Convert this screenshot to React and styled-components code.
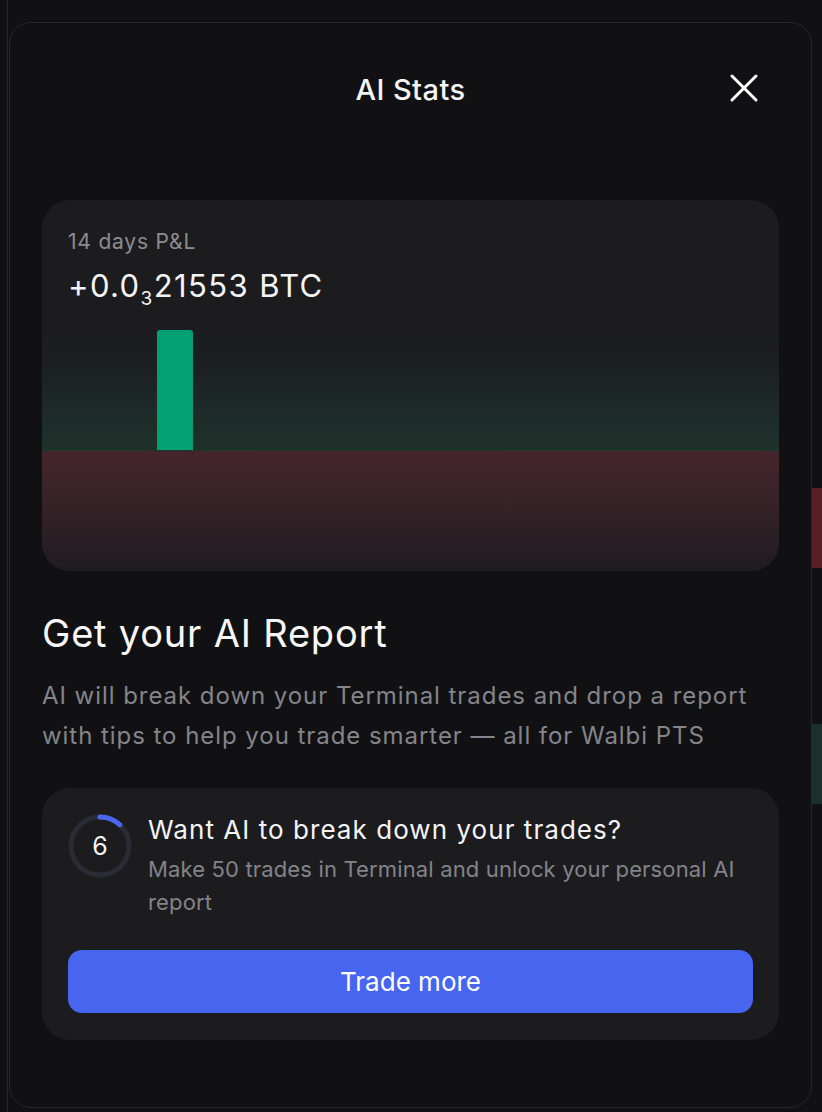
import React from "react";
import styled, { createGlobalStyle } from "styled-components";

const GlobalStyle = createGlobalStyle`
  html, body {
    margin: 0;
    padding: 0;
    background: #111114;
  }
  body {
    font-family: "Inter", "Noto Sans", sans-serif;
    -webkit-font-smoothing: antialiased;
  }
`;

const Page = styled.div`
  width: 822px;
  height: 1112px;
  box-sizing: border-box;
  padding: 22px 10px 4px 9px;
  background-color: #111114;
  background-image: linear-gradient(
      to right,
      transparent 7px,
      #26272b 7px,
      #26272b 8px,
      transparent 8px
    ),
    linear-gradient(
      to bottom,
      transparent 488px,
      rgba(120, 36, 44, 0.7) 488px,
      rgba(120, 36, 44, 0.7) 568px,
      transparent 568px,
      transparent 724px,
      rgba(40, 80, 66, 0.5) 724px,
      rgba(40, 80, 66, 0.5) 804px,
      transparent 804px
    );
  background-size: 100% 100%, 10px 100%;
  background-position: 0 0, right 0 top 0;
  background-repeat: no-repeat;
`;

const Modal = styled.div`
  height: 100%;
  box-sizing: border-box;
  background: #111114;
  border: 1.5px solid #26272b;
  border-radius: 22px;
  padding: 0 32px;
  display: flex;
  flex-direction: column;
`;

const Header = styled.div`
  position: relative;
  height: 132px;
  display: flex;
  align-items: center;
  justify-content: center;
`;

const Title = styled.h2`
  margin: 0;
  font-size: 29px;
  font-weight: 500;
  color: #f4f4f6;
  letter-spacing: 0.4px;
`;

const CloseButton = styled.button`
  position: absolute;
  right: 18px;
  top: 48px;
  width: 34px;
  height: 34px;
  padding: 0;
  border: none;
  background: transparent;
  cursor: pointer;
  display: flex;
  align-items: center;
  justify-content: center;
`;

const ChartCard = styled.div`
  margin-top: 45px;
  height: 371px;
  background: #1c1c1f;
  border-radius: 28px;
  overflow: hidden;
  display: flex;
  flex-direction: column;
`;

const ChartHead = styled.div`
  padding: 29px 26px 0;
`;

const Label = styled.div`
  font-size: 21px;
  color: #8c8c92;
  line-height: 26px;
  letter-spacing: 0.8px;
`;

const Amount = styled.div`
  margin-top: 14px;
  font-size: 31px;
  color: #f4f4f6;
  line-height: 34px;
  letter-spacing: 1.4px;
  sub {
    font-size: 19px;
    vertical-align: -8px;
    line-height: 0;
  }
`;

const Plot = styled.div`
  margin-top: 27px;
  flex: 1;
  display: flex;
  flex-direction: column;
`;

const Positive = styled.div`
  height: 120px;
  display: flex;
  align-items: flex-end;
  padding-left: 115px;
  background: linear-gradient(
    to bottom,
    rgba(28, 28, 31, 1) 0%,
    #1b1f1f 25%,
    #1e2b28 70%,
    #1f312b 100%
  );
  border-bottom: 1px dotted #2c4a40;
`;

const Bar = styled.div`
  width: 36px;
  height: ${(p) => p.h}px;
  background: #02a072;
  border-radius: 3px 3px 0 0;
`;

const Negative = styled.div`
  flex: 1;
  background: linear-gradient(
    to bottom,
    #45252b 0%,
    #3b2429 30%,
    #2b1f24 70%,
    #1e1c20 100%
  );
`;

const Heading = styled.h1`
  margin: 40px 0 0;
  font-size: 38px;
  font-weight: 400;
  color: #f7f7f9;
  line-height: 44px;
  letter-spacing: 0.8px;
`;

const Description = styled.p`
  margin: 21px 0 0;
  font-size: 24px;
  line-height: 40px;
  color: #84848a;
  letter-spacing: 0.95px;
`;

const TaskCard = styled.div`
  margin-top: 32px;
  background: #1c1c1f;
  border-radius: 28px;
  padding: 26px 26px 27px;
  display: flex;
  flex-direction: column;
  gap: 31px;
`;

const TaskRow = styled.div`
  display: flex;
  gap: 16px;
  align-items: flex-start;
`;

const Ring = styled.div`
  position: relative;
  width: 64px;
  height: 64px;
  flex-shrink: 0;
  display: flex;
  align-items: center;
  justify-content: center;
  svg {
    position: absolute;
    inset: 0;
  }
`;

const RingCount = styled.span`
  font-size: 25px;
  color: #f4f4f6;
`;

const TaskText = styled.div`
  display: flex;
  flex-direction: column;
`;

const TaskTitle = styled.div`
  font-size: 26px;
  line-height: 32px;
  color: #f4f4f6;
  letter-spacing: 1.05px;
`;

const TaskSub = styled.div`
  margin-top: 6.5px;
  font-size: 22px;
  line-height: 33px;
  color: #838389;
  letter-spacing: 0.15px;
`;

const PrimaryButton = styled.button`
  height: 63px;
  border: none;
  border-radius: 14px;
  background: #4865f0;
  color: #ffffff;
  font-family: inherit;
  font-size: 26px;
  cursor: pointer;
`;

const ProgressRing = ({ value, total }) => {
  const r = 29;
  const c = 2 * Math.PI * r;
  const len = (value / total) * c;
  return (
    <Ring>
      <svg width="64" height="64" viewBox="0 0 64 64">
        <circle cx="32" cy="32" r={r} fill="none" stroke="#2a2c35" strokeWidth="5" />
        <circle
          cx="32"
          cy="32"
          r={r}
          fill="none"
          stroke="#4a66f0"
          strokeWidth="5"
          strokeLinecap="round"
          strokeDasharray={`${len} ${c}`}
          transform="rotate(-90 32 32)"
        />
      </svg>
      <RingCount>{value}</RingCount>
    </Ring>
  );
};

const App = () => {
  return (
    <Page>
      <GlobalStyle />
      <Modal>
        <Header>
          <Title>AI Stats</Title>
          <CloseButton aria-label="Close">
            <svg width="30" height="30" viewBox="0 0 30 30">
              <path
                d="M3 3 L27 27 M27 3 L3 27"
                stroke="#ffffff"
                strokeWidth="3"
                strokeLinecap="round"
              />
            </svg>
          </CloseButton>
        </Header>
        <ChartCard>
          <ChartHead>
            <Label>14 days P&amp;L</Label>
            <Amount>
              +0.0<sub>3</sub>21553 BTC
            </Amount>
          </ChartHead>
          <Plot>
            <Positive>
              <Bar h={120} />
            </Positive>
            <Negative />
          </Plot>
        </ChartCard>
        <Heading>Get your AI Report</Heading>
        <Description>
          AI will break down your Terminal trades and drop a report with tips to
          help you trade smarter — all for Walbi PTS
        </Description>
        <TaskCard>
          <TaskRow>
            <ProgressRing value={6} total={50} />
            <TaskText>
              <TaskTitle>Want AI to break down your trades?</TaskTitle>
              <TaskSub>
                Make 50 trades in Terminal and unlock your personal AI report
              </TaskSub>
            </TaskText>
          </TaskRow>
          <PrimaryButton>Trade more</PrimaryButton>
        </TaskCard>
      </Modal>
    </Page>
  );
};

export default App;
